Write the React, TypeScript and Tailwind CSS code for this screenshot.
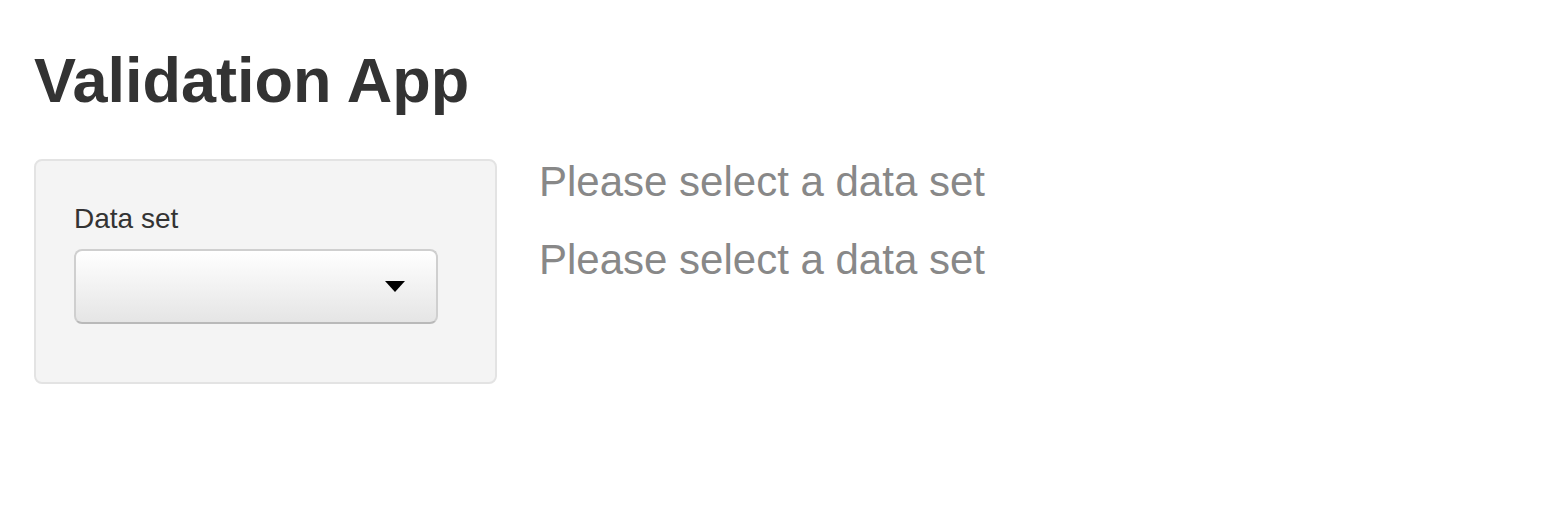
import React from "react";

export default function App() {
  return (
    <div
      className="min-h-[508px] w-full bg-white pl-[34px] pt-[46px] text-[#333]"
      style={{ fontFamily: '"Liberation Sans", Arial, Helvetica, sans-serif' }}
    >
      <h1 className="m-0 text-[63px] font-bold leading-[69px] text-[#333]">Validation App</h1>
      <div className="mt-[44px] flex items-start">
        <div className="w-[463px] rounded-[8px] border-2 border-[#e3e3e3] bg-[#f4f4f4] px-[38px] pb-[58px] pt-[38px]">
          <div className="mb-[10px] text-[28px] leading-[40px] text-[#333]">Data set</div>
          <div className="flex h-[75px] w-[364px] items-center justify-end rounded-[8px] border-2 border-[#cfcfcf] border-b-[#b9b9b9] bg-gradient-to-b from-[#ffffff] to-[#e5e5e5] pr-[31px]">
            <svg width="20" height="12" viewBox="0 0 20 12">
              <path d="M0 0 L20 0 L10 11 Z" fill="#000" />
            </svg>
          </div>
        </div>
        <div className="ml-[42px] mt-[5px] flex flex-col gap-[42px] text-[42px] leading-[36px] text-[#888]">
          <div>Please select a data set</div>
          <div>Please select a data set</div>
        </div>
      </div>
    </div>
  );
}
